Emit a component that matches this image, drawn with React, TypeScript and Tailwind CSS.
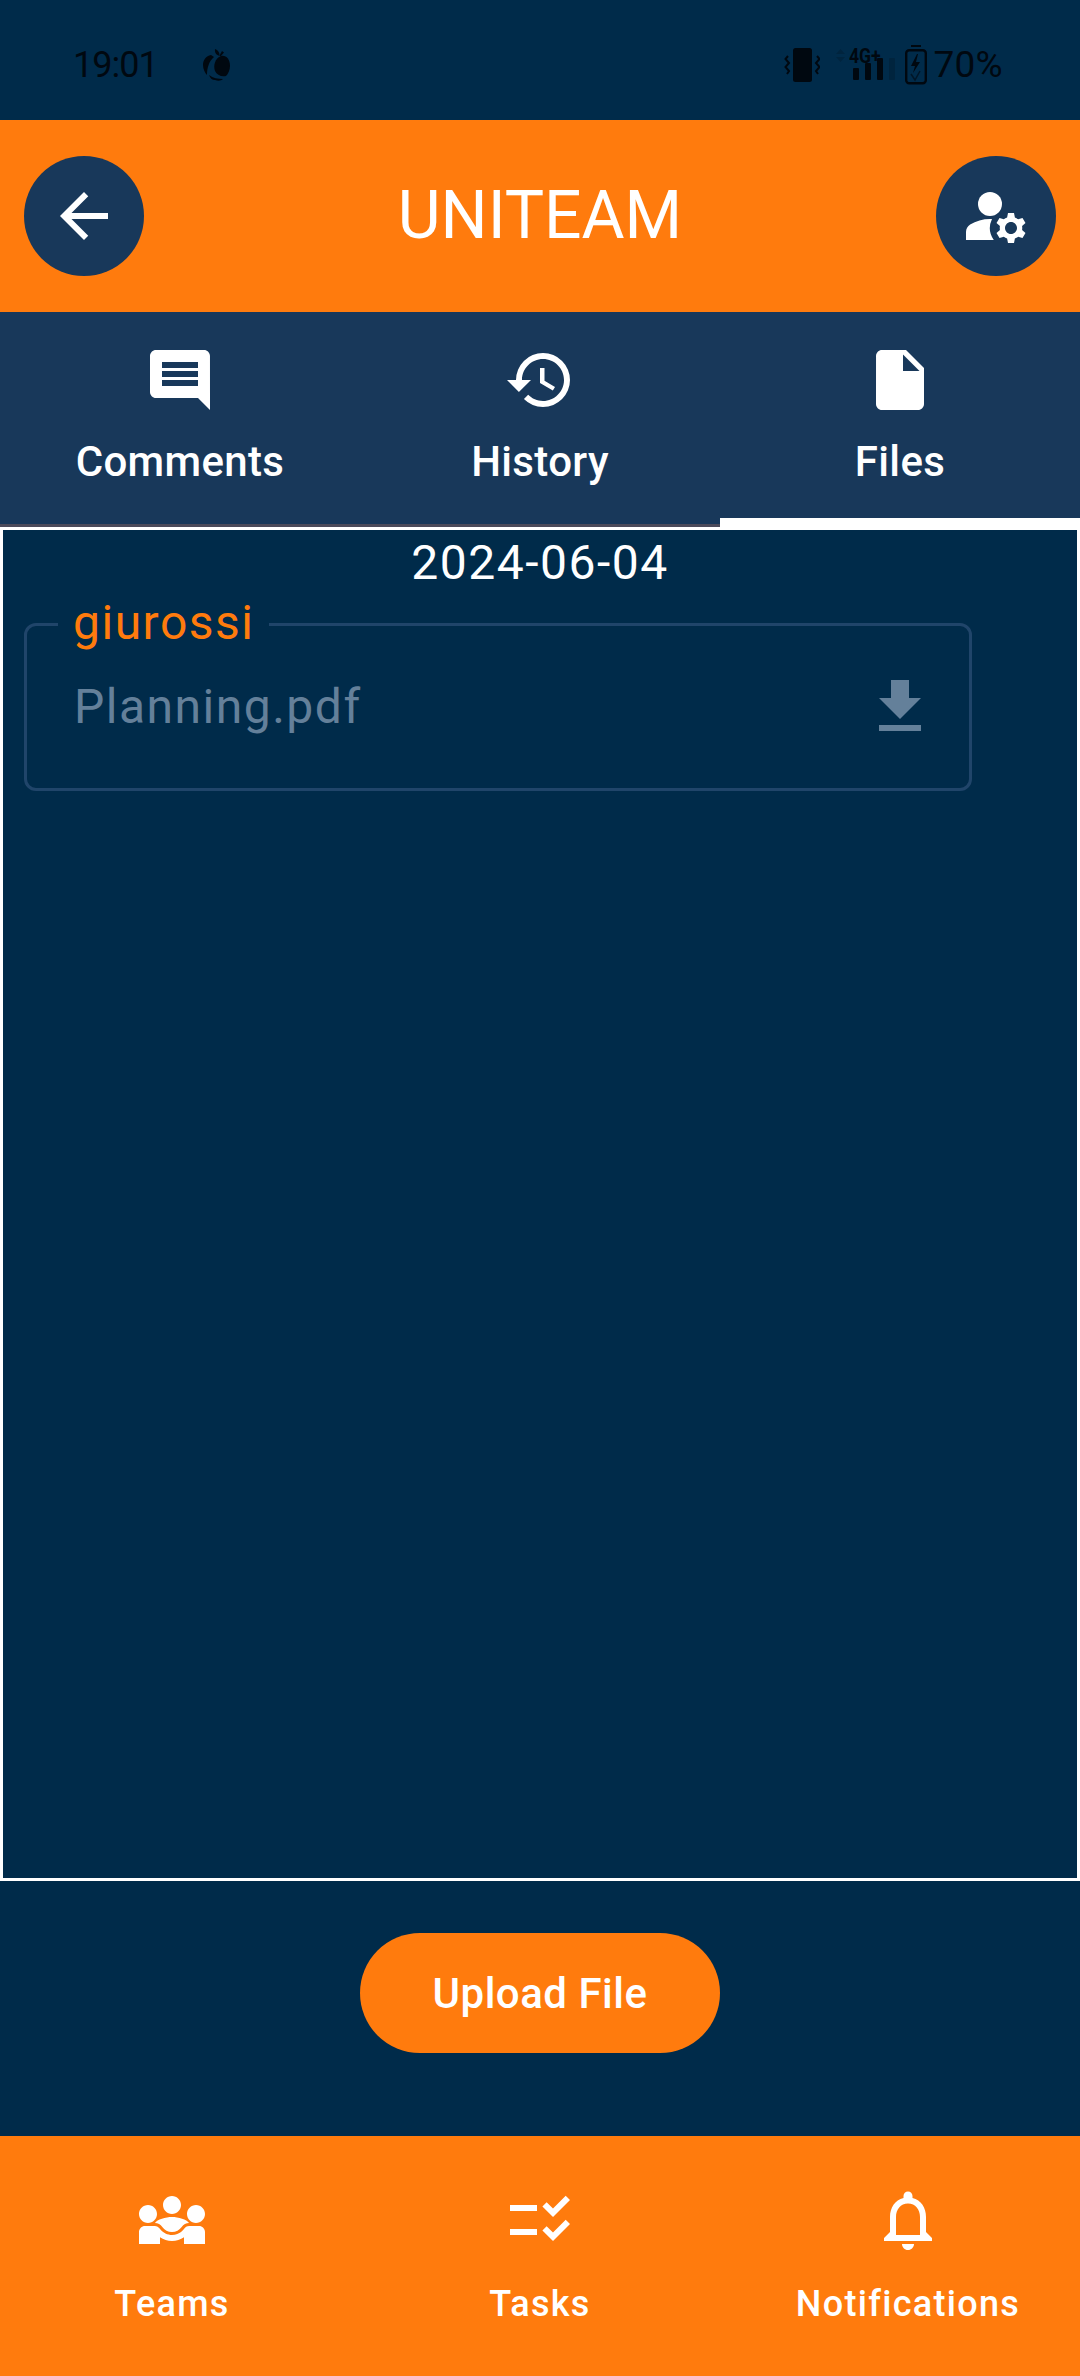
import { MdArrowBack, MdManageAccounts, MdComment, MdHistory, MdInsertDriveFile, MdFileDownload, MdChecklistRtl, MdOutlineNotifications, MdDiversity3 } from "react-icons/md";

function Apple() {
  return (
    <svg width="27" height="32" viewBox="0 0 27 32" fill="#000810">
      <path d="M12 0c3 1 4.500 3 4.500 7-3-1-5-3-4.500-7z" />
      <path d="M19 2l2 1.500-3.500 4-1-1z" />
      <path d="M8 6C3 7 0 11 0 16c0 4 2 8 4 10 0-7 2-14 7-18z" />
      <path d="M18 7c5-1 9 3 9 10 0 4-2 8-4 10-5 1-9-1-11-5-2-5 0-13 6-15z" />
      <path d="M6 26c1 3 3 5 6 5 3 1 6 1 8-1-5 0-10-1-14-4z" />
    </svg>
  );
}

function Vibrate() {
  return (
    <svg width="36" height="36" viewBox="0 0 36 36" fill="none">
      <rect x="9" y="1" width="19" height="34" rx="2.5" fill="#000810" />
      <path d="M4 9l-2.500 3 3.500 4-3.500 4 3.500 4-2 3M33 9l2.500 3-3.500 4 3.500 4-3.500 4 2 3" stroke="#000810" strokeWidth="2" />
    </svg>
  );
}

function Network() {
  return (
    <div className="relative w-[64px] h-[36px] ml-[12px]">
      <svg className="absolute inset-0" width="64" height="36" viewBox="0 0 64 36" fill="#000810">
        <path d="M4 7l4.500-5 4.500 5zM4 10l4.500 5 4.500-5z" opacity="0.2" />
        <rect x="21" y="21" width="6" height="12" rx="1" />
        <rect x="33" y="16" width="6" height="17" rx="1" />
        <rect x="45" y="11" width="6" height="22" rx="1" />
        <rect x="57" y="11" width="6" height="22" rx="1" opacity="0.2" />
      </svg>
      <span className="absolute left-[17px] top-[-3px] text-[20px] leading-[24px] font-bold text-[#000810] scale-x-[0.88] origin-left">4G+</span>
    </div>
  );
}

function Battery() {
  return (
    <svg className="ml-[9px]" width="22" height="40" viewBox="0 0 22 40" fill="none">
      <rect x="6" y="0" width="10" height="2" fill="#000810" />
      <rect x="1.200" y="5.200" width="19.600" height="33" rx="3" stroke="#000810" strokeWidth="2.400" />
      <path d="M12 9l-6 12h4l-2 7 7-11h-4l2-8z" fill="#000810" />
      <path d="M6 29l4 6 5-9" stroke="#000810" strokeWidth="1.500" opacity="0.6" />
    </svg>
  );
}

function Tab({ label, active, children }: { label: string; active?: boolean; children: React.ReactNode }) {
  return (
    <div className="relative flex-1 flex flex-col items-center pt-[32px] border-b-[3px] border-[#4b4a5a]">
      <span className="text-white text-[72px] leading-none">{children}</span>
      <span className="mt-[16px] text-white text-[42px] leading-[60px] font-medium tracking-[0.35px]">{label}</span>
      {active && <span className="absolute left-0 right-0 bottom-[-3px] h-[9px] bg-white" />}
    </div>
  );
}

function NavItem({ label, children }: { label: string; children: React.ReactNode }) {
  return (
    <div className="flex flex-col items-center pt-[48px]">
      <span className="text-white text-[72px] leading-none">{children}</span>
      <span className="mt-[24px] text-white text-[36px] leading-[48px] font-medium tracking-[1.3px]">{label}</span>
    </div>
  );
}

export default function App() {
  return (
    <div className="w-[1080px] h-[2376px] flex flex-col bg-[#002b4a] font-['Roboto',sans-serif] overflow-hidden">
      <div className="h-[120px] shrink-0 flex items-center justify-between pt-[10px] pl-[73px] pr-[77px]">
        <div className="flex items-center">
          <span className="w-[130px] text-[#000810] text-[36px] leading-[44px] tracking-[-1px]">19:01</span>
          <Apple />
        </div>
        <div className="flex items-center text-[#000810]">
          <Vibrate />
          <Network />
          <Battery />
          <span className="ml-[6px] text-[37px] leading-[44px] tracking-[0.3px]">70%</span>
        </div>
      </div>

      <header className="h-[192px] shrink-0 bg-[#ff7b0d] flex items-center justify-between px-[24px]">
        <div className="w-[120px] h-[120px] rounded-full bg-[#18385a] flex items-center justify-center text-white">
          <MdArrowBack size={72} />
        </div>
        <h1 className="text-white text-[66px] leading-[84px] font-normal">UNITEAM</h1>
        <div className="w-[120px] h-[120px] rounded-full bg-[#18385a] flex items-center justify-center text-white">
          <MdManageAccounts size={72} />
        </div>
      </header>

      <div className="h-[215px] shrink-0 bg-[#18385a] flex">
        <Tab label="Comments"><MdComment /></Tab>
        <Tab label="History"><MdHistory /></Tab>
        <Tab label="Files" active><MdInsertDriveFile /></Tab>
      </div>

      <main className="h-[1354px] shrink-0 border-[3px] border-white flex flex-col">
        <div className="text-center text-white text-[48px] leading-[66px] tracking-[1.5px]">2024-06-04</div>
        <div className="relative mt-[27px] ml-[21px] w-[948px] h-[168px] rounded-[12px] border-[3px] border-[#20456a] flex items-center justify-between pl-[47px] pr-[33px]">
          <span className="absolute left-[31px] top-[-33px] bg-[#002b4a] px-[15px] text-[#ff7b0d] text-[48px] leading-[60px] tracking-[1.5px]">giurossi</span>
          <span className="text-[#64809a] text-[48px] leading-[72px] tracking-[1.5px]">Planning.pdf</span>
          <MdFileDownload size={72} className="text-[#64809a]" />
        </div>
      </main>

      <div className="flex-1 flex justify-center pt-[52px]">
        <button className="w-[360px] h-[120px] rounded-full bg-[#ff7b0d] text-white text-[42px] font-medium tracking-[0.5px]">Upload File</button>
      </div>

      <nav className="h-[240px] shrink-0 bg-[#ff7b0d] grid grid-cols-3 gap-[24px]">
        <NavItem label="Teams"><MdDiversity3 /></NavItem>
        <NavItem label="Tasks"><MdChecklistRtl /></NavItem>
        <NavItem label="Notifications"><MdOutlineNotifications /></NavItem>
      </nav>
    </div>
  );
}
